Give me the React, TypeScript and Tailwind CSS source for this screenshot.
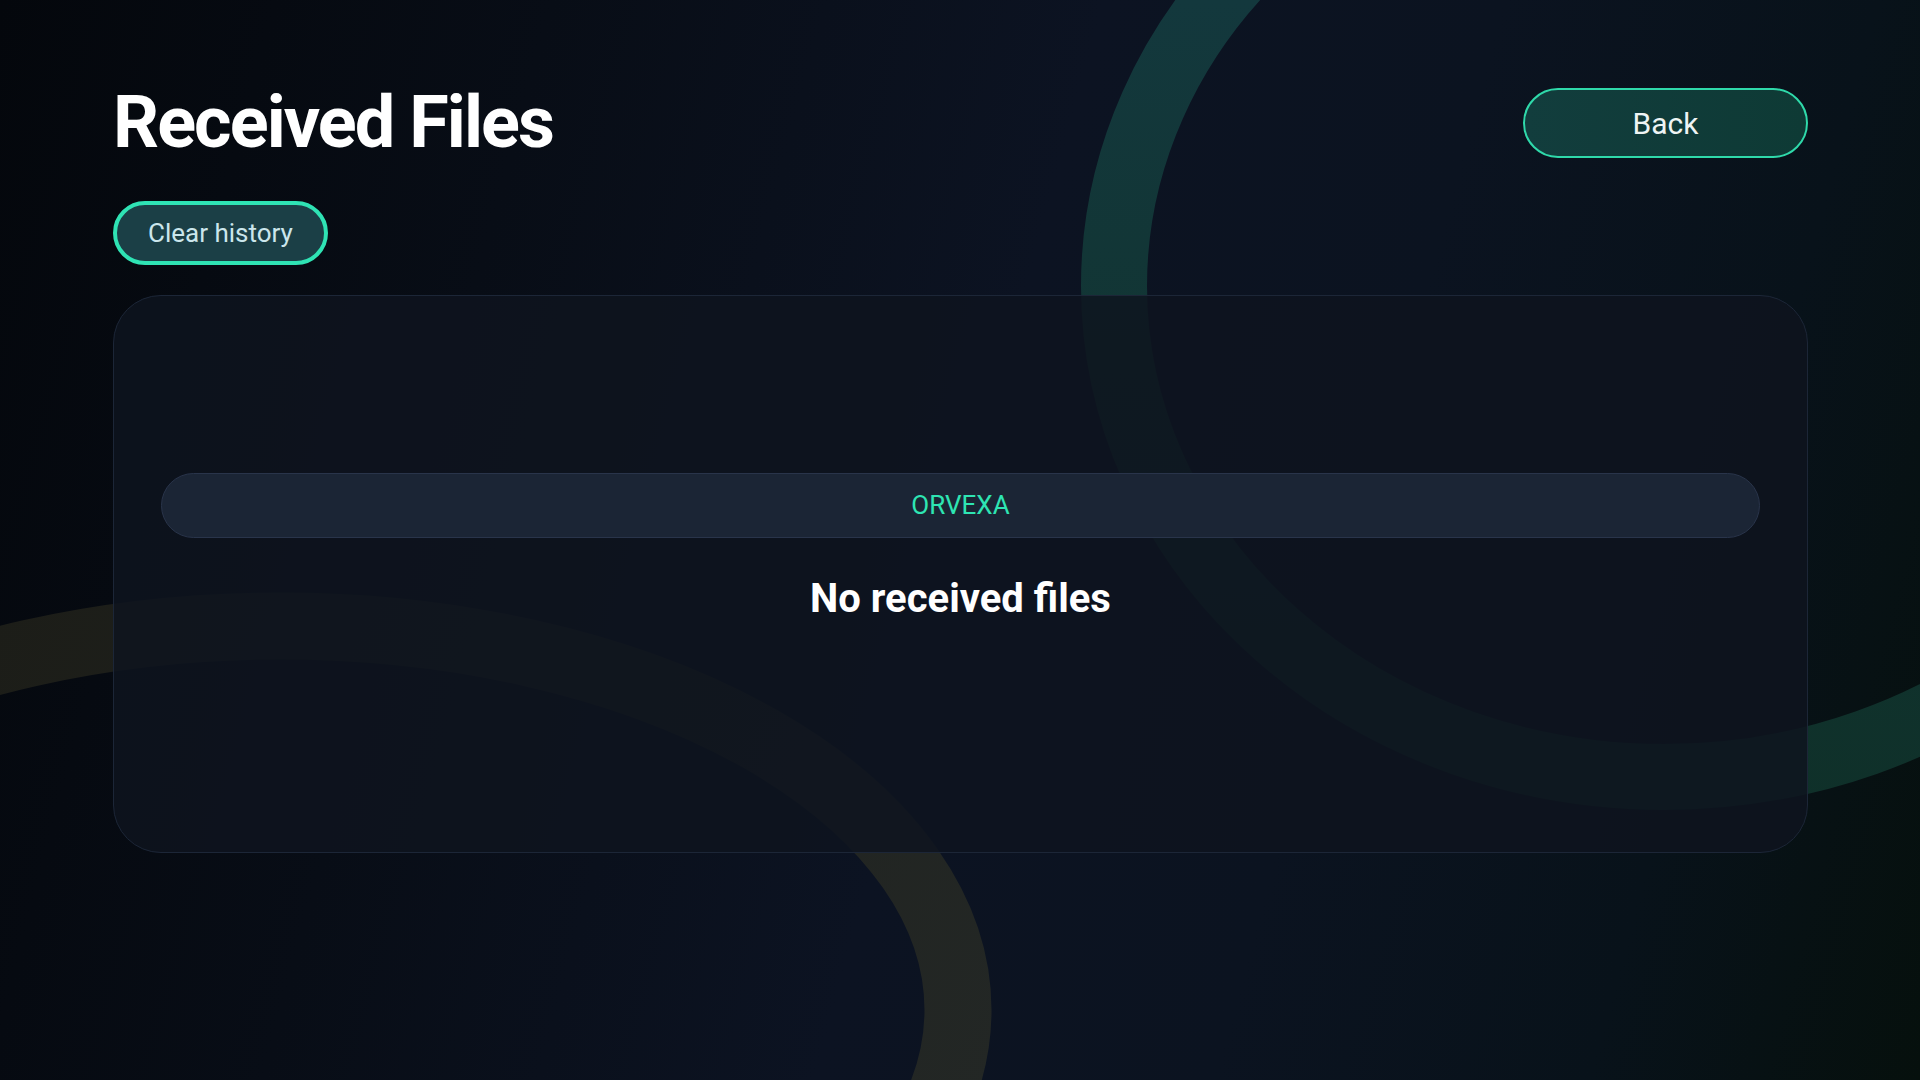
import React from "react";

function Backdrop() {
  return (
    <svg
      className="pointer-events-none absolute inset-0 h-full w-full"
      viewBox="0 0 1920 1080"
      preserveAspectRatio="none"
      aria-hidden
    >
      <defs>
        <linearGradient id="tealRing" gradientUnits="userSpaceOnUse" x1="0" y1="0" x2="0" y2="820">
          <stop offset="0" stopColor="#13383d" />
          <stop offset="0.6" stopColor="#113430" />
          <stop offset="1" stopColor="#0f3029" />
        </linearGradient>
        <linearGradient id="oliveRing" gradientUnits="userSpaceOnUse" x1="0" y1="600" x2="1000" y2="1080">
          <stop offset="0" stopColor="#1c1d18" />
          <stop offset="1" stopColor="#232725" />
        </linearGradient>
      </defs>
      <ellipse cx="1664" cy="286" rx="550" ry="491" fill="none" stroke="url(#tealRing)" strokeWidth="66" />
      <ellipse cx="280" cy="1010" rx="678" ry="384" fill="none" stroke="url(#oliveRing)" strokeWidth="67" />
    </svg>
  );
}

export default function App() {
  return (
    <div className="relative h-screen w-full overflow-hidden bg-[linear-gradient(105deg,#04070c_0%,#080d16_25%,#0c1322_50%,#0b1320_68%,#08121a_85%,#06100d_100%)] font-['Roboto','Liberation_Sans',sans-serif]">
      <Backdrop />

      <div className="relative flex flex-col px-[112px] pt-[88px]">
        <header className="flex h-[70px] items-center justify-between">
          <h1 className="pl-px text-[72px] font-bold leading-none tracking-[-0.027em] text-white">
            Received Files
          </h1>
          <button className="flex h-[70px] w-[285px] items-center justify-center rounded-full border-2 border-[#2fd9aa] bg-[linear-gradient(90deg,#123d3d,#0e3a35)] text-[30px] text-[#eef4f4]">
            Back
          </button>
        </header>

        <div className="mt-[43px] pl-px">
          <button className="flex h-[64px] items-center rounded-full border-4 border-[#2fe3b4] bg-[#1b3f46] px-[31px] text-[26px] text-[#cbe6ec]">
            Clear history
          </button>
        </div>

        <section className="mt-[30px] ml-px h-[558px] rounded-[48px] border border-[#1c2637] bg-[#0e141f]/85 px-[47px] pt-[177px]">
          <div className="flex h-[65px] items-center justify-center rounded-full border border-[#29344a] bg-[#1b2535] text-[26px] text-[#2ee5b3]">
            ORVEXA
          </div>
          <p className="mt-[37px] text-center text-[40px] font-bold leading-[1.2] text-white">
            No received files
          </p>
        </section>
      </div>
    </div>
  );
}
